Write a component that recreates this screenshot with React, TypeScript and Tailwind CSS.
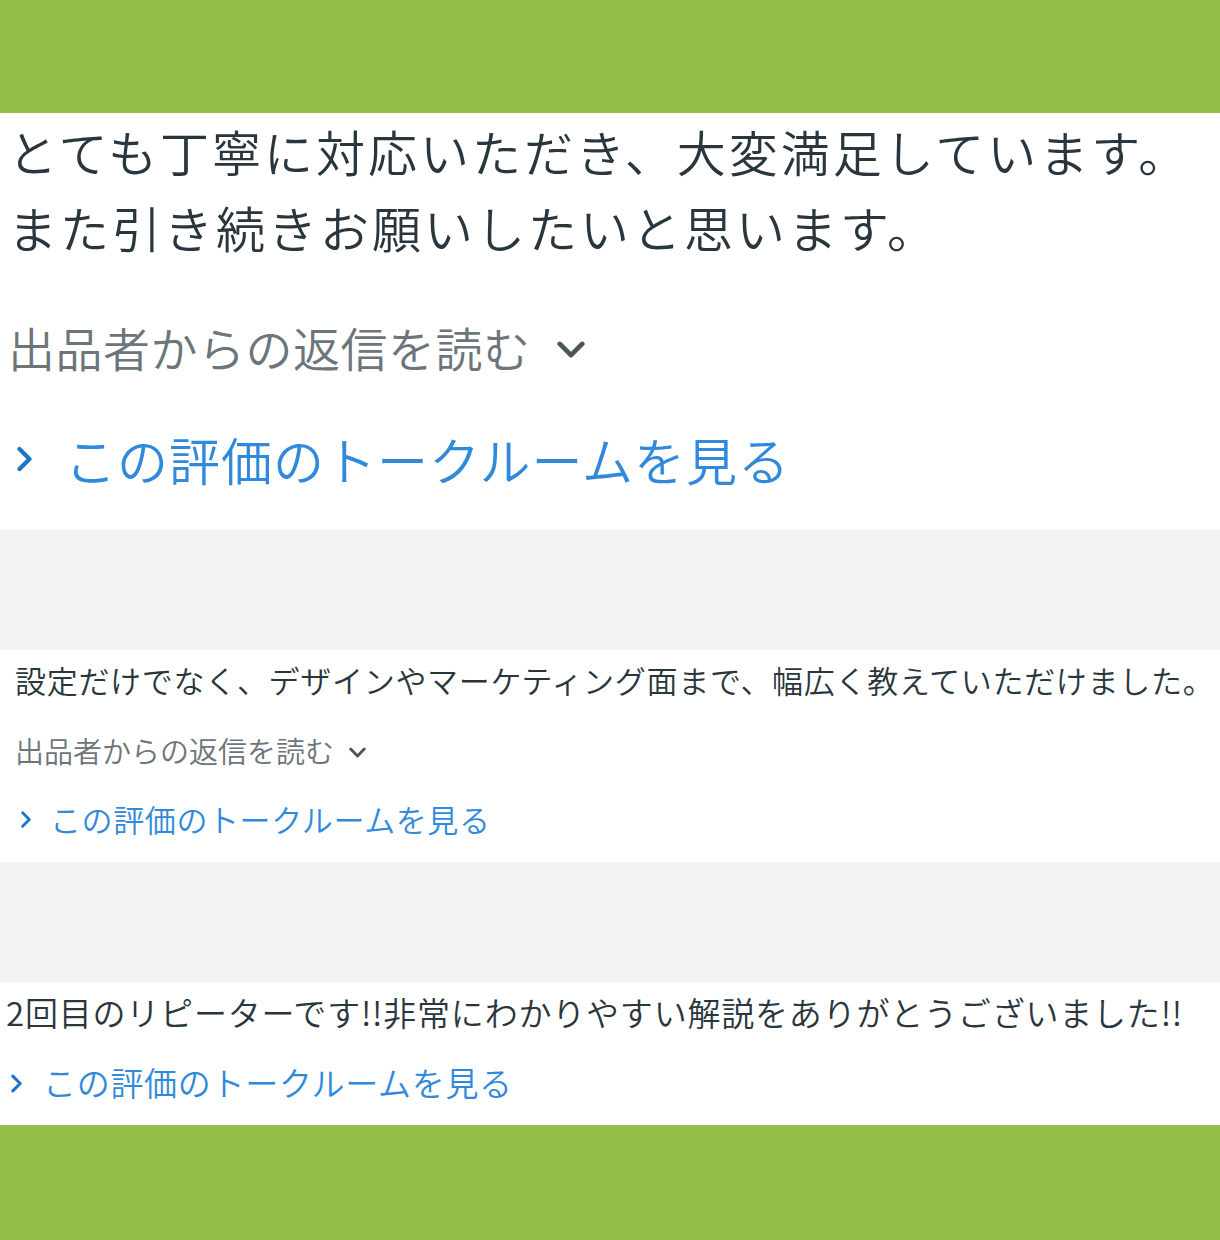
import React from 'react'

const font = { fontFamily: '"Noto Sans CJK JP", "Noto Sans", sans-serif' }

function ChevronDown({ className }: { className: string }) {
  return (
    <svg viewBox="0 0 20 12" className={className} fill="none" stroke="currentColor" strokeWidth="3.4" strokeLinecap="round" strokeLinejoin="round">
      <polyline points="2,2 10,10 18,2" />
    </svg>
  )
}

function ChevronRight({ className }: { className: string }) {
  return (
    <svg viewBox="0 0 12 20" className={className} fill="none" stroke="currentColor" strokeWidth="3.4" strokeLinecap="round" strokeLinejoin="round">
      <polyline points="2,2 10,10 2,18" />
    </svg>
  )
}

export default function App() {
  return (
    <div className="w-[1220px] h-[1240px] bg-white flex flex-col font-[350]" style={font}>
      <div className="h-[113px] bg-[#95bf47]" />

      {/* large review */}
      <section className="h-[417px] pl-[8px] flex flex-col">
        <p className="text-[49px] leading-[76px] text-[#2a363e] tracking-[3px]">
          とても丁寧に対応いただき、大変満足しています。<br />
          また引き続きお願いしたいと思います。
        </p>
        <div className="mt-[44px] flex items-center h-[76px]">
          <span className="text-[47px] text-[#6c757a] tracking-[0.5px]">出品者からの返信を読む</span>
          <ChevronDown className="w-[28px] h-[17px] ml-[26px] mt-[4px] text-[#4b5459]" />
        </div>
        <div className="mt-[36px] flex items-center h-[76px]">
          <ChevronRight className="w-[15px] h-[26px] ml-[9px] text-[#1f73c9]" />
          <span className="ml-[33px] text-[51px] text-[#3189dc] tracking-[1px]">この評価のトークルームを見る</span>
        </div>
      </section>

      <div className="h-[120px] bg-[#f2f3f5]" />

      {/* medium review */}
      <section className="h-[212px] pl-[15px] flex flex-col">
        <p className="mt-[9px] text-[31px] leading-[42px] text-[#2a363e] tracking-[0.7px]">
          設定だけでなく、デザインやマーケティング面まで、幅広く教えていただけました。
        </p>
        <div className="mt-[28px] flex items-center h-[44px]">
          <span className="text-[29px] text-[#6c757a]">出品者からの返信を読む</span>
          <ChevronDown className="w-[17px] h-[11px] ml-[15px] mt-[2px] text-[#4b5459]" />
        </div>
        <div className="mt-[24px] flex items-center h-[44px]">
          <ChevronRight className="w-[10px] h-[17px] ml-[6px] text-[#1f73c9]" />
          <span className="ml-[19px] text-[31px] text-[#3189dc] tracking-[0.6px]">この評価のトークルームを見る</span>
        </div>
      </section>

      <div className="h-[120px] bg-[#f2f3f5]" />

      {/* small review */}
      <section className="h-[143px] pl-[6px] flex flex-col">
        <p className="mt-[8px] text-[33px] leading-[44px] text-[#2a363e] tracking-[0.8px]">
          2回目のリピーターです!!非常にわかりやすい解説をありがとうございました!!
        </p>
        <div className="mt-[27px] flex items-center h-[44px]">
          <ChevronRight className="w-[11px] h-[19px] ml-[5px] text-[#1f73c9]" />
          <span className="ml-[21px] text-[33px] text-[#3189dc] tracking-[0.7px]">この評価のトークルームを見る</span>
        </div>
      </section>

      <div className="flex-1 bg-[#95bf47]" />
    </div>
  )
}
